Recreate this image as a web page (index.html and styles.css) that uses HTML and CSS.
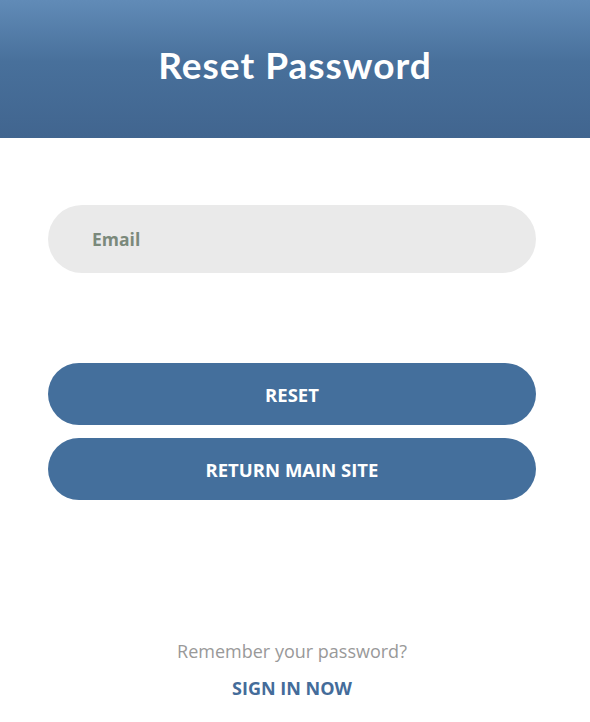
FILE: index.html
```html
<!DOCTYPE html>
<html lang="en">
<head>
<meta charset="utf-8">
<title>Reset Password</title>
<link rel="stylesheet" href="styles.css">
</head>
<body>
<header class="hero">
  <h1 class="hero-title">Reset Password</h1>
</header>
<main class="form">
  <div class="field">
    <input class="field-input" type="email" placeholder="Email">
  </div>
  <div class="actions">
    <button class="btn" type="button">RESET</button>
    <button class="btn" type="button">RETURN MAIN SITE</button>
  </div>
  <div class="footer">
    <p class="footer-text">Remember your password?</p>
    <a class="footer-link" href="#">SIGN IN NOW</a>
  </div>
</main>
</body>
</html>
```
FILE: styles.css
```css
* { box-sizing: border-box; }
html, body {
  margin: 0;
  padding: 0;
  background: #ffffff;
  font-family: "Open Sans", "Noto Sans", sans-serif;
}
.hero {
  height: 138px;
  background: linear-gradient(to bottom, #618bb7 0%, #48709b 45%, #41658f 100%);
  display: flex;
  align-items: center;
  justify-content: center;
}
.hero-title {
  margin: 0;
  color: #ffffff;
  font-family: "Lato", sans-serif;
  font-weight: 700;
  font-size: 37px;
  letter-spacing: 1px;
  transform: translateY(-5px);
}
.form {
  padding: 67px 54px 0 48px;
  display: flex;
  flex-direction: column;
}
.field-input {
  display: block;
  width: 100%;
  height: 68px;
  border: none;
  outline: none;
  border-radius: 34px;
  background: #eaeaea;
  padding: 0 0 0 44px;
  font-family: "Open Sans", sans-serif;
  font-size: 17.5px;
  font-weight: 700;
  color: #7b897b;
}
.field-input::placeholder {
  color: #7b897b;
  opacity: 1;
}
.actions {
  margin-top: 90px;
  display: flex;
  flex-direction: column;
  gap: 13px;
}
.btn {
  height: 62px;
  border: none;
  border-radius: 31px;
  background: #446f9c;
  color: #ffffff;
  font-family: "Open Sans", sans-serif;
  font-weight: 700;
  font-size: 18.5px;
  letter-spacing: 0;
  cursor: pointer;
}
.footer {
  margin-top: 139px;
  display: flex;
  flex-direction: column;
  align-items: center;
}
.footer-text {
  margin: 0;
  color: #999999;
  font-size: 18px;
  line-height: 24px;
}
.footer-link {
  margin-top: 13px;
  color: #446c9a;
  font-weight: 700;
  font-size: 18px;
  line-height: 24px;
  text-decoration: none;
}
```
